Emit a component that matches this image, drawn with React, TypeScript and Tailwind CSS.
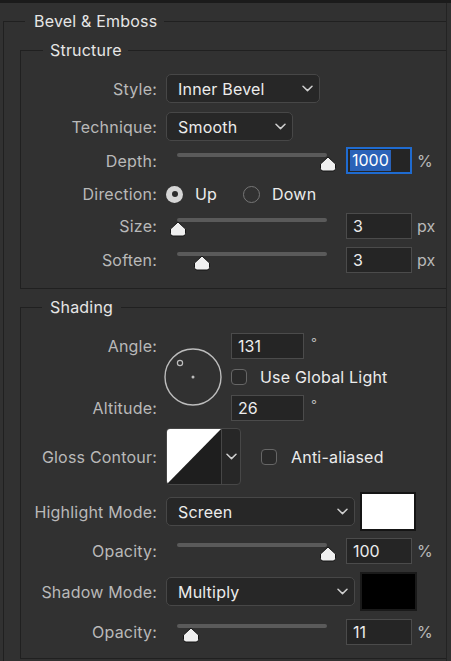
import type { ReactNode } from "react"

function Chevron() {
  return (
    <svg width="11" height="7" viewBox="0 0 11 7" fill="none">
      <polyline points="1,1.2 5.5,5.6 10,1.2" stroke="#cfcfcf" strokeWidth="1.5" strokeLinecap="round" strokeLinejoin="round" />
    </svg>
  )
}

function Thumb() {
  return (
    <svg width="18" height="16" viewBox="0 0 18 16">
      <path d="M9 1 L16.5 8 V12.5 Q16.5 15 14 15 H4 Q1.5 15 1.5 12.5 V8 Z" fill="#efefef" stroke="#151515" strokeWidth="1" />
    </svg>
  )
}

function Select({ value, className }: { value: string; className: string }) {
  return (
    <div
      className={`flex h-[29px] items-center justify-between rounded-[5px] border border-[#474747] bg-[#272727] pl-[11px] pr-[6px] text-[16px] tracking-[0.2px] text-[#ececec] ${className}`}
    >
      <span>{value}</span>
      <Chevron />
    </div>
  )
}

function NumInput({ value, className = "w-[66px]" }: { value: string; className?: string }) {
  return (
    <div className={`flex h-[26px] items-center border-[1.5px] border-[#4b4b4b] bg-[#252525] pl-[6px] text-[16px] text-[#ececec] ${className}`}>
      {value}
    </div>
  )
}

// pos = px from left end of the track to thumb centre
function Slider({ pos }: { pos: number }) {
  return (
    <div className="relative h-[26px] w-[170px] shrink-0">
      <div className="absolute left-[11px] top-[5px] h-[4px] w-[150px] rounded-full bg-[#5a5a5a]" />
      <div className="absolute top-[8px]" style={{ left: 11 + pos - 9 }}>
        <Thumb />
      </div>
    </div>
  )
}

function Row({ label, children, className = "" }: { label: string; children: ReactNode; className?: string }) {
  return (
    <div className={`flex items-center ${className}`}>
      <div className="w-[136px] shrink-0 text-right text-[16px] leading-[20px] tracking-[0.2px] text-[#b9b9b9]">{label}</div>
      <div className="ml-[9px] flex items-center">{children}</div>
    </div>
  )
}

function SliderRow({ label, pos, value, unit, className = "" }: { label: string; pos: number; value: string; unit: string; className?: string }) {
  return (
    <Row label={label} className={className}>
      <Slider pos={pos} />
      <NumInput value={value} className="ml-[10px] w-[66px]" />
      <span className="ml-[5px] text-[16px] text-[#b9b9b9]">{unit}</span>
    </Row>
  )
}

function Checkbox() {
  return <div className="h-[16px] w-[16px] shrink-0 rounded-[4px] border-[1.5px] border-[#666666] bg-[#2a2a2a]" />
}

export default function App() {
  return (
    <div className="h-[661px] w-[451px] overflow-hidden border-t-[3px] border-[#1b1b1b] bg-[#313131] font-['Inter',sans-serif]">
      <div className="h-full w-[447px] overflow-hidden border-r border-[#232323]">
        {/* Bevel & Emboss */}
        <fieldset className="ml-[3px] mt-[9px] w-[470px] border border-[#202020] pb-[20px]">
          <legend className="ml-[21px] pl-[9px] pr-[7px] text-[16px] leading-[18px] tracking-[0.2px] text-[#e6e6e6]">Bevel &amp; Emboss</legend>

          {/* Structure */}
          <fieldset className="ml-[16px] mt-[11px] w-[460px] border border-[#202020] pb-[15px]">
            <legend className="ml-[22px] pl-[7px] pr-[6px] text-[16px] leading-[18px] tracking-[0.2px] text-[#e6e6e6]">Structure</legend>

            <Row label="Style:" className="mt-[15px]">
              <Select value="Inner Bevel" className="w-[154px]" />
            </Row>
            <Row label="Technique:" className="mt-[9px]">
              <Select value="Smooth" className="w-[127px]" />
            </Row>
            <Row label="Depth:" className="mt-[6px]">
              <Slider pos={151} />
              <div className="ml-[10px] flex h-[27px] w-[66px] items-center border-2 border-[#1f6bd0] bg-[#252525] pl-[2px] text-[16px] text-white">
                <span className="bg-[#2a62b8] px-[2px] leading-[21px]">1000</span>
              </div>
              <span className="ml-[5px] text-[16px] text-[#b9b9b9]">%</span>
            </Row>
            <Row label="Direction:" className="mt-[8px] h-[24px]">
              <div className="flex h-[17px] w-[17px] items-center justify-center rounded-full bg-[#d6d6d6]">
                <div className="h-[6px] w-[6px] rounded-full bg-[#2c2c2c]" />
              </div>
              <span className="ml-[12px] text-[16px] tracking-[0.2px] text-[#ececec]">Up</span>
              <div className="ml-[26px] h-[17px] w-[17px] rounded-full border-[1.5px] border-[#767676]" />
              <span className="ml-[12px] text-[16px] tracking-[0.2px] text-[#ececec]">Down</span>
            </Row>
            <SliderRow label="Size:" pos={1} value="3" unit="px" className="mt-[7px]" />
            <SliderRow label="Soften:" pos={25} value="3" unit="px" className="mt-[8px]" />
          </fieldset>

          {/* Shading */}
          <fieldset className="ml-[16px] mt-[9px] w-[460px] border border-[#202020] pb-[13px]">
            <legend className="ml-[21px] pl-[8px] pr-[8px] text-[16px] leading-[18px] tracking-[0.2px] text-[#e6e6e6]">Shading</legend>

            <div className="mt-[17px] flex">
              <div className="flex h-[88px] w-[136px] shrink-0 flex-col justify-between text-right text-[16px] tracking-[0.2px] text-[#b9b9b9]">
                <div className="leading-[26px]">Angle:</div>
                <div className="leading-[26px]">Altitude:</div>
              </div>
              <svg className="ml-[7px] mt-[15px] shrink-0" width="58" height="58" viewBox="0 0 58 58">
                <circle cx="29" cy="29" r="28" fill="none" stroke="#bdbdbd" strokeWidth="1.4" />
                <circle cx="16" cy="15" r="2.6" fill="none" stroke="#bdbdbd" strokeWidth="1.2" />
                <circle cx="29" cy="29" r="1.5" fill="#bdbdbd" />
              </svg>
              <div className="ml-[9px] flex flex-col">
                <div className="flex items-start">
                  <NumInput value="131" className="w-[73px]" />
                  <span className="ml-[7px] text-[13px] leading-[20px] text-[#b9b9b9]">°</span>
                </div>
                <div className="mt-[8px] flex h-[20px] items-center">
                  <Checkbox />
                  <span className="ml-[13px] text-[16px] tracking-[0.2px] text-[#ececec]">Use Global Light</span>
                </div>
                <div className="mt-[8px] flex items-start">
                  <NumInput value="26" className="w-[73px]" />
                  <span className="ml-[7px] text-[13px] leading-[20px] text-[#b9b9b9]">°</span>
                </div>
              </div>
            </div>

            <Row label="Gloss Contour:" className="mt-[7px]">
              <div className="flex h-[57px] w-[75px] overflow-hidden rounded-[4px] border border-[#474747] bg-[#272727]">
                <svg width="54" height="55" viewBox="0 0 54 55" className="shrink-0">
                  <rect width="54" height="55" fill="#1e1e1e" />
                  <polygon points="0,0 54,0 0,55" fill="#ffffff" />
                </svg>
                <div className="flex flex-1 items-center justify-center border-l border-[#474747]">
                  <Chevron />
                </div>
              </div>
              <div className="ml-[20px]">
                <Checkbox />
              </div>
              <span className="ml-[14px] text-[16px] tracking-[0.2px] text-[#ececec]">Anti-aliased</span>
            </Row>

            <Row label="Highlight Mode:" className="mt-[7px]">
              <Select value="Screen" className="w-[189px]" />
              <div className="ml-[5px] h-[39px] w-[56px] border-2 border-[#151515] bg-white" />
            </Row>
            <SliderRow label="Opacity:" pos={151} value="100" unit="%" className="mt-[7px]" />

            <Row label="Shadow Mode:" className="mt-[8px]">
              <Select value="Multiply" className="w-[189px]" />
              <div className="ml-[5px] h-[39px] w-[57px] border-2 border-[#1a1a1a] bg-black" />
            </Row>
            <SliderRow label="Opacity:" pos={14} value="11" unit="%" className="mt-[8px]" />
          </fieldset>
        </fieldset>
      </div>
    </div>
  )
}
